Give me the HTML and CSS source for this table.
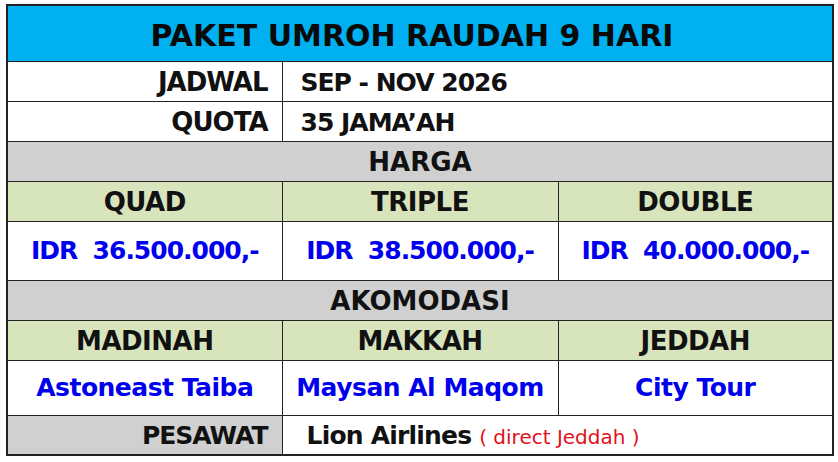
FILE: index.html
```html
<!DOCTYPE html>
<html>
<head>
<meta charset="utf-8">
<link rel="stylesheet" href="styles.css">
</head>
<body>
<table class="sheet">
  <colgroup><col class="c1"><col class="c2"><col class="c3"></colgroup>
  <tr class="r-title"><td colspan="3" class="title">PAKET UMROH RAUDAH 9 HARI</td></tr>
  <tr class="r-info"><td class="label">JADWAL</td><td colspan="2" class="value">SEP - NOV 2026</td></tr>
  <tr class="r-info"><td class="label">QUOTA</td><td colspan="2" class="value">35 JAMA’AH</td></tr>
  <tr class="r-sec"><td colspan="3" class="section">HARGA</td></tr>
  <tr class="r-head"><td class="head">QUAD</td><td class="head">TRIPLE</td><td class="head">DOUBLE</td></tr>
  <tr class="r-price"><td class="price">IDR  36.500.000,-</td><td class="price">IDR  38.500.000,-</td><td class="price">IDR  40.000.000,-</td></tr>
  <tr class="r-sec"><td colspan="3" class="section">AKOMODASI</td></tr>
  <tr class="r-head"><td class="head">MADINAH</td><td class="head">MAKKAH</td><td class="head">JEDDAH</td></tr>
  <tr class="r-hotel"><td class="hotel">Astoneast Taiba</td><td class="hotel">Maysan Al Maqom</td><td class="hotel">City Tour</td></tr>
  <tr class="r-info"><td class="label gray">PESAWAT</td><td colspan="2" class="value air">Lion Airlines <span class="note">( direct Jeddah )</span></td></tr>
</table>
</body>
</html>
```

FILE: styles.css
```css
html, body {
  margin: 0;
  padding: 0;
  background: #ffffff;
}
body {
  padding: 4px 0 0 6px;
  font-family: "DejaVu Sans", "Liberation Sans", sans-serif;
  font-weight: bold;
  color: #111111;
}
.sheet {
  border-collapse: collapse;
  table-layout: fixed;
  width: 826px;
  border: 2px solid #222222;
}
.c1 { width: 275px; }
.c2 { width: 276px; }
.c3 { width: 275px; }
.sheet td {
  border: 1.5px solid #222222;
  padding: 0;
  vertical-align: middle;
  white-space: pre;
  overflow: hidden;
  line-height: 1;
}
.r-title { height: 56px; }
.r-info { height: 40px; }
.r-sec { height: 40px; }
.r-head { height: 40px; }
.r-price { height: 59px; }
.r-hotel { height: 55px; }

.sheet .title {
  background: #00b0f0;
  text-align: center;
  font-size: 30px;
  color: #0a0a0a;
  padding-top: 5px;
  padding-right: 16px;
}
.sheet .label {
  text-align: right;
  font-size: 26px;
  letter-spacing: -1px;
  padding-right: 14px;
  padding-top: 2px;
}
.sheet .label.gray {
  background: #d0d0d0;
  font-size: 25px;
}
.sheet .value {
  text-align: left;
  font-size: 25px;
  letter-spacing: -1px;
  padding-left: 18px;
  padding-top: 2px;
}
.sheet .section {
  background: #d0d0d0;
  text-align: center;
  font-size: 26px;
  padding-top: 2px;
}
.sheet .head {
  background: #d8e4bc;
  text-align: center;
  font-size: 26px;
  letter-spacing: -0.5px;
  padding-top: 2px;
}
.sheet .price {
  text-align: center;
  font-size: 25px;
  letter-spacing: -1px;
  color: #0000ee;
}
.sheet .hotel {
  text-align: center;
  font-size: 25px;
  letter-spacing: -0.5px;
  color: #0000ee;
}
.sheet .air {
  padding-left: 24px;
  letter-spacing: -0.8px;
}
.note {
  font-size: 20px;
  font-weight: normal;
  letter-spacing: 0;
  color: #e3101a;
}
```
